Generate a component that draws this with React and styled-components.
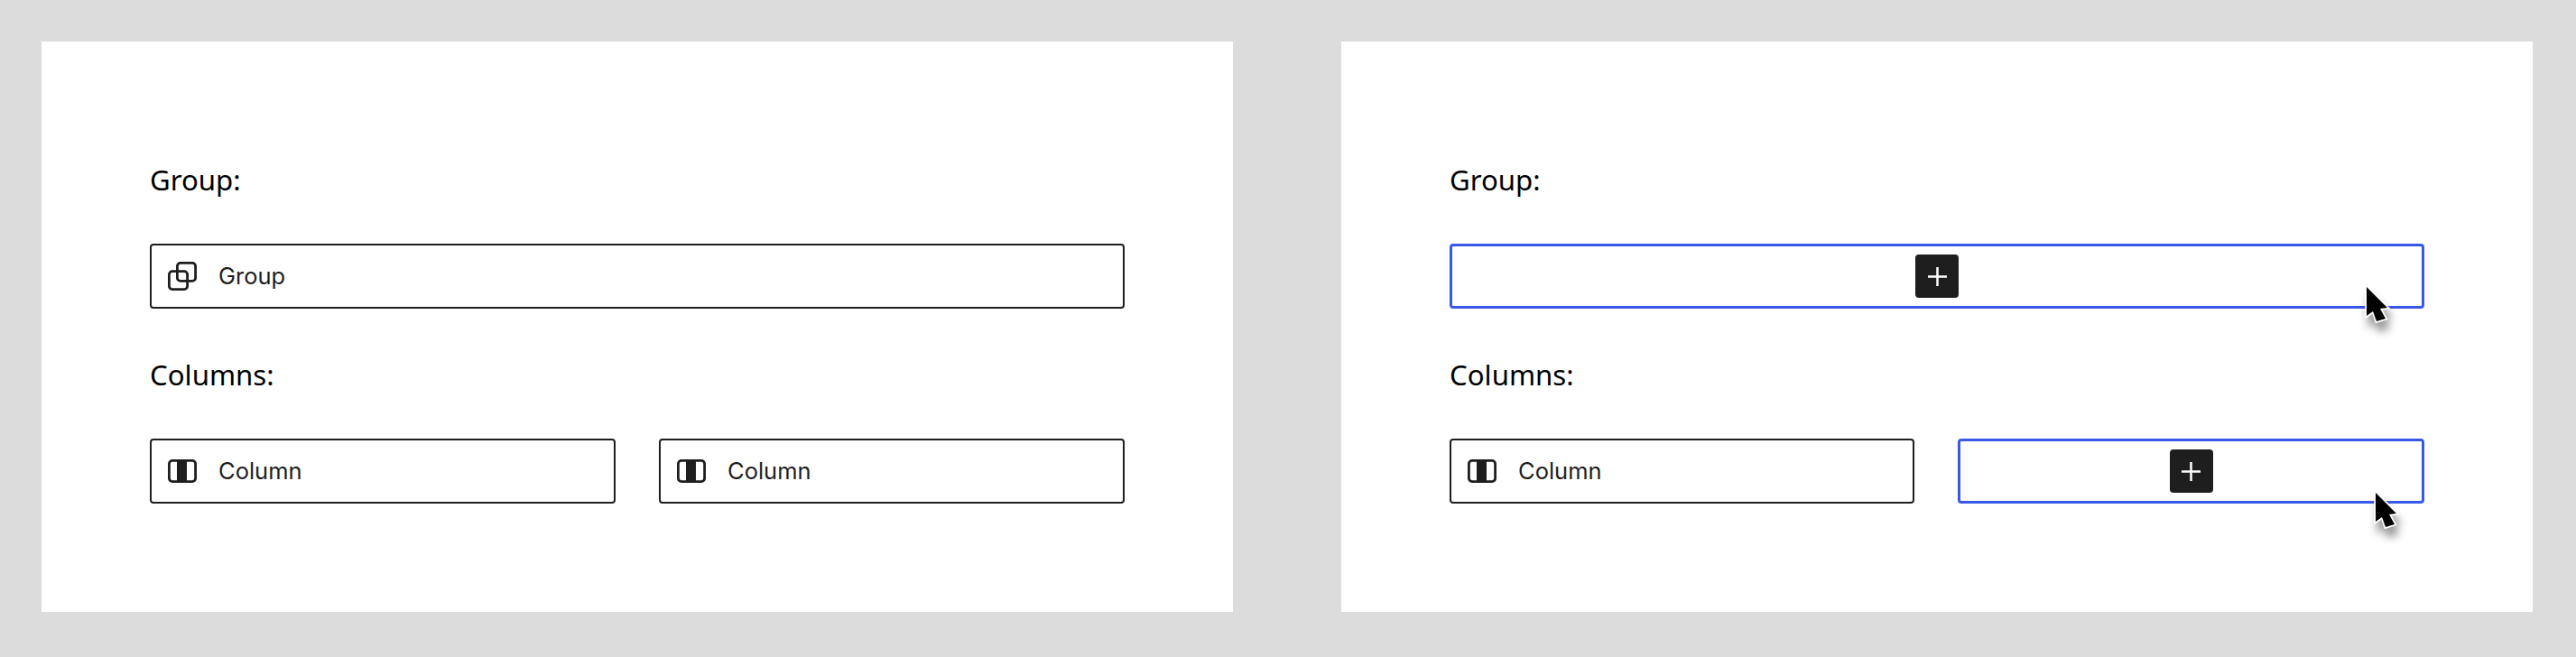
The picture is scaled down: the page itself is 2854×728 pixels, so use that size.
import styled, { createGlobalStyle } from "styled-components";

const GlobalStyle = createGlobalStyle`
  html, body {
    margin: 0;
    padding: 0;
    background: #dcdcdc;
  }
`;

const Page = styled.div`
  width: 2854px;
  height: 728px;
  box-sizing: border-box;
  padding: 46px 48px 50px 46px;
  display: flex;
  gap: 120px;
`;

const Panel = styled.section`
  position: relative;
  flex: 1;
  background: #fff;
  padding: 133px 120px 0;
`;

const Heading = styled.h3`
  margin: 0 0 51px;
  font: 400 31.2px/40px "Noto Sans", sans-serif;
  color: #000;
`;

const Row = styled.div`
  display: flex;
  gap: 48px;
  margin-bottom: 53px;
`;

const Block = styled.div`
  position: relative;
  flex: 1;
  height: 72px;
  box-sizing: border-box;
  display: flex;
  align-items: center;
  justify-content: ${(p) => (p.$active ? "center" : "flex-start")};
  gap: 24px;
  padding: 0 18px;
  border: ${(p) => (p.$active ? "3px solid #3858e9" : "2px solid #1e1e1e")};
  border-radius: 4px;
`;

const Label = styled.span`
  font: 400 25.5px/34px Inter, sans-serif;
  color: #1e1e1e;
`;

const AddButton = styled.span`
  width: 48px;
  height: 48px;
  border-radius: 4px;
  background: #1e1e1e;
  display: flex;
  align-items: center;
  justify-content: center;
`;

const Pointer = styled.svg`
  position: absolute;
  right: ${(p) => p.$right}px;
  top: ${(p) => p.$top}px;
  width: 36px;
  height: 50px;
  overflow: visible;
  filter: drop-shadow(3px 10px 5px rgba(0, 0, 0, 0.4));
`;

const GroupIcon = () => (
  <svg width="32" height="32" viewBox="0 0 32 32" fill="none" stroke="#1e1e1e" strokeWidth="2.8">
    <rect x="10.4" y="1.4" width="20.2" height="20" rx="3.5" />
    <rect x="1.4" y="10.6" width="20.2" height="20" rx="3.5" />
  </svg>
);

const ColumnIcon = () => (
  <svg width="32" height="26" viewBox="0 0 32 26" fill="none">
    <rect x="1.4" y="1.4" width="29.2" height="23.2" rx="3.5" stroke="#1e1e1e" strokeWidth="2.8" />
    <rect x="10" y="1" width="11" height="24" fill="#1e1e1e" />
  </svg>
);

const PlusIcon = () => (
  <svg width="21" height="21" viewBox="0 0 21 21" stroke="#fff" strokeWidth="2.5">
    <path d="M10.5 0v21M0 10.5h21" />
  </svg>
);

const Cursor = ({ right, top }) => (
  <Pointer $right={right} $top={top} viewBox="0 0 36 50">
    <path d="M4 4 V36 L11 31 L15 42 L25 39 L19 28 L27 27 Z" fill="#000" stroke="#fff" strokeWidth="3.5" paintOrder="stroke" strokeLinejoin="miter" />
  </Pointer>
);

const Filled = ({ icon, children }) => (
  <Block>
    {icon}
    <Label>{children}</Label>
  </Block>
);

const Empty = () => (
  <Block $active>
    <AddButton>
      <PlusIcon />
    </AddButton>
  </Block>
);

export default function App() {
  return (
    <>
      <GlobalStyle />
      <Page>
        <Panel>
          <Heading>Group:</Heading>
          <Row>
            <Filled icon={<GroupIcon />}>Group</Filled>
          </Row>
          <Heading>Columns:</Heading>
          <Row>
            <Filled icon={<ColumnIcon />}>Column</Filled>
            <Filled icon={<ColumnIcon />}>Column</Filled>
          </Row>
        </Panel>
        <Panel>
          <Heading>Group:</Heading>
          <Row>
            <Empty />
          </Row>
          <Heading>Columns:</Heading>
          <Row>
            <Filled icon={<ColumnIcon />}>Column</Filled>
            <Empty />
          </Row>
          <Cursor right={152} top={268} />
          <Cursor right={142} top={496} />
        </Panel>
      </Page>
    </>
  );
}
